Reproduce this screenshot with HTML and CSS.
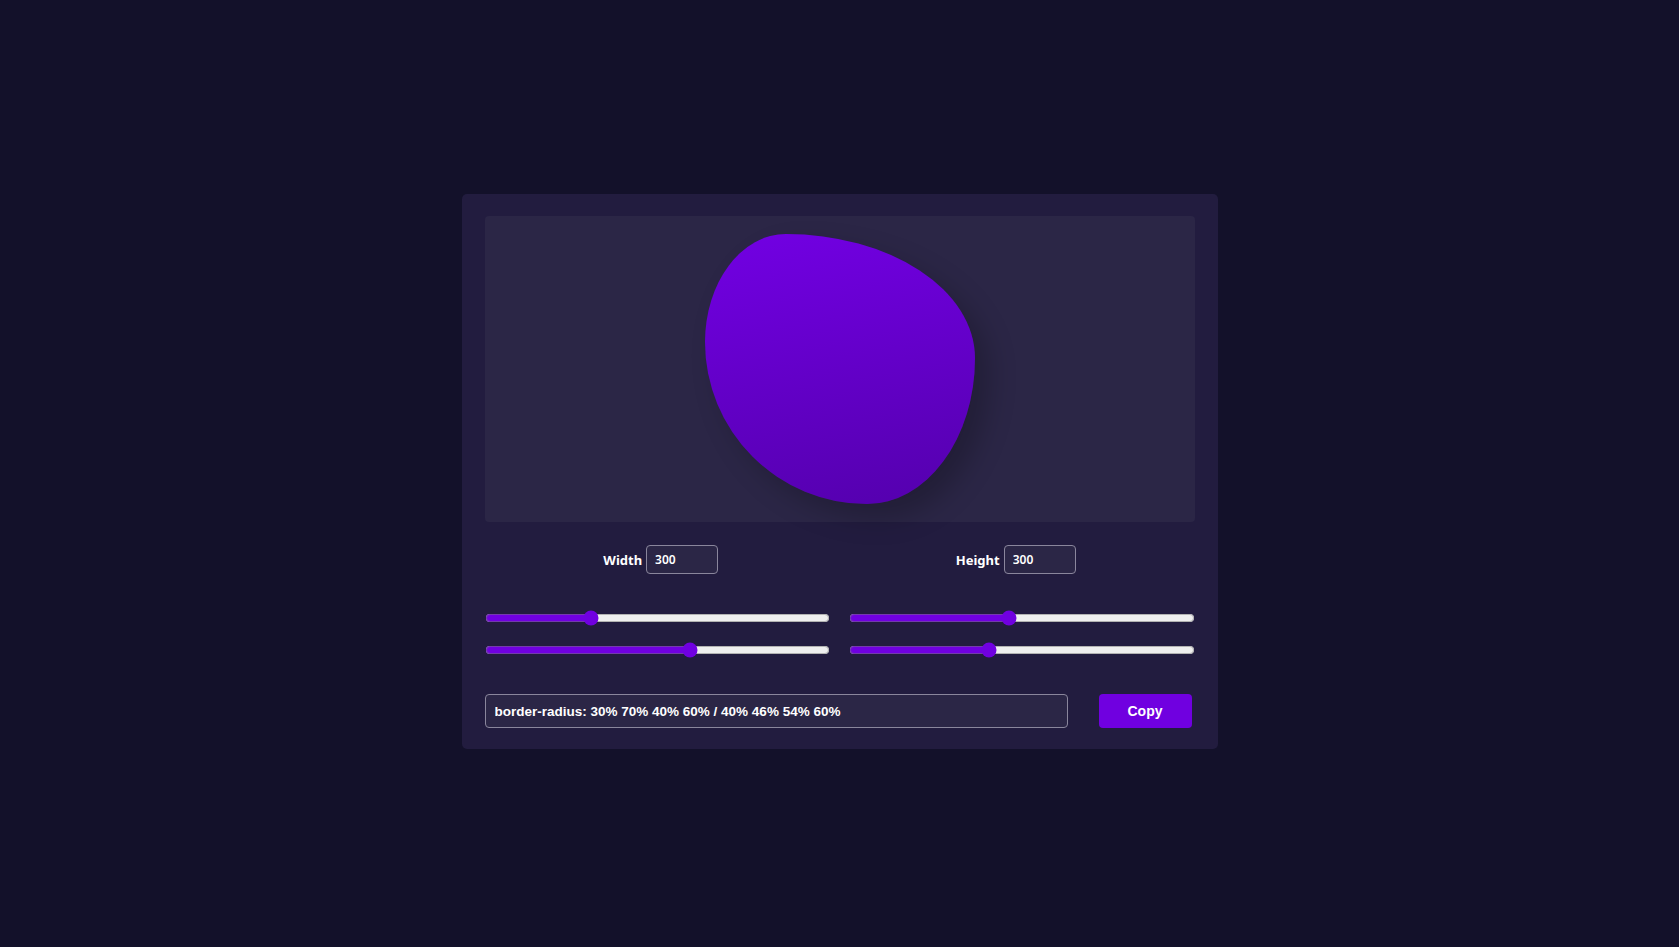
FILE: index.html
```html
<!DOCTYPE html>
<html lang="en">
<head>
<meta charset="utf-8">
<title>Blob Generator</title>
<link rel="stylesheet" href="styles.css">
</head>
<body>
<main class="card">
  <div class="preview">
    <div class="blob"></div>
  </div>
  <div class="dims">
    <div class="dim"><label class="dim-label" for="w">Width</label><input class="dim-input" id="w" type="number" value="300"></div>
    <div class="dim"><label class="dim-label" for="h">Height</label><input class="dim-input" id="h" type="number" value="300"></div>
  </div>
  <div class="sliders">
    <input class="slider" type="range" min="0" max="100" value="30">
    <input class="slider" type="range" min="0" max="100" value="46">
    <input class="slider" type="range" min="0" max="100" value="60">
    <input class="slider" type="range" min="0" max="100" value="40">
  </div>
  <div class="output">
    <input class="code" type="text" readonly value="border-radius: 30% 70% 40% 60% / 40% 46% 54% 60%">
    <button class="copy" type="button">Copy</button>
  </div>
</main>
</body>
</html>
```
FILE: styles.css
```css
* { box-sizing: border-box; }
html, body { margin: 0; height: 100%; }
body {
  background: #13112a;
  display: flex;
  align-items: center;
  justify-content: center;
  padding-bottom: 4px;
  font-family: "Noto Sans", "Open Sans", sans-serif;
  color: #fff;
}
.card {
  width: 756px;
  background: #221c3f;
  border-radius: 5px;
  padding: 22px 23px 21px;
}
.preview {
  height: 306px;
  background: #2b2646;
  border-radius: 4px;
  display: flex;
  align-items: center;
  justify-content: center;
}
.blob {
  width: 270px;
  height: 270px;
  border-radius: 30% 70% 40% 60% / 40% 46% 54% 60%;
  background: linear-gradient(170deg, #7200e3 0%, #5400ad 100%);
  box-shadow: 14px 14px 28px rgba(0, 0, 0, 0.22);
}
.dims {
  margin-top: 23px;
  display: flex;
  justify-content: space-around;
}
.dim {
  display: flex;
  align-items: center;
  gap: 4px;
}
.dim-label {
  font-weight: 700;
  font-size: 13px;
}
.dim-input {
  width: 72px;
  height: 29px;
  background: #2b2646;
  border: 1px solid #8a869c;
  border-radius: 4px;
  color: #fff;
  font-family: "Noto Sans", "Open Sans", sans-serif;
  font-size: 12px;
  font-weight: 600;
  padding: 0 8px;
  -moz-appearance: textfield;
}
.dim-input::-webkit-outer-spin-button,
.dim-input::-webkit-inner-spin-button { -webkit-appearance: none; margin: 0; }
.sliders {
  margin-top: 36px;
  display: grid;
  grid-template-columns: 1fr 1fr;
  column-gap: 19px;
  row-gap: 16px;
}
.slider {
  width: 100%;
  height: 16px;
  margin: 0;
  accent-color: #7000e0;
}
.output {
  margin-top: 36px;
  display: flex;
  gap: 31px;
  padding-right: 3px;
}
.code {
  flex: 1;
  height: 34px;
  background: #2b2646;
  border: 1px solid #8a869c;
  border-radius: 4px;
  color: #fff;
  font-family: "Liberation Sans", Arial, sans-serif;
  font-weight: 700;
  font-size: 13.5px;
  padding: 0 9px;
}
.copy {
  width: 93px;
  height: 34px;
  background: #7000e0;
  border: none;
  border-radius: 4px;
  color: #fff;
  font-family: "Liberation Sans", Arial, sans-serif;
  font-weight: 700;
  font-size: 14px;
}
```
